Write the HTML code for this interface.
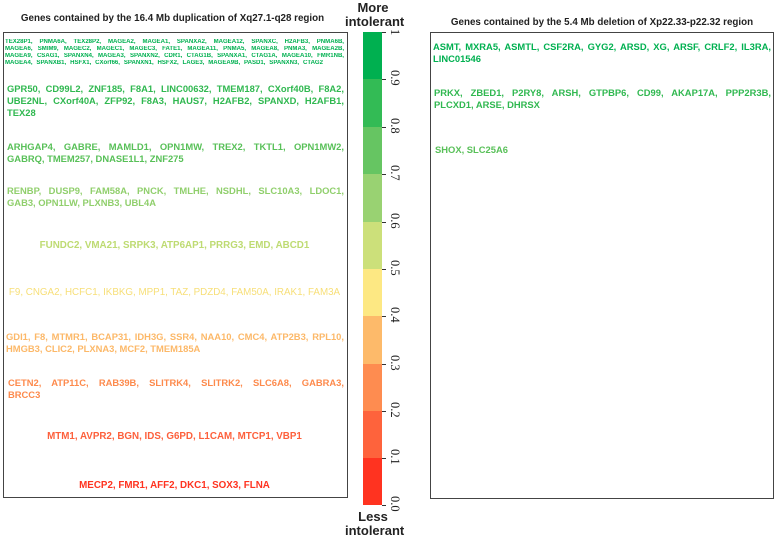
<!DOCTYPE html>
<html><head><style>
body{margin:0;width:777px;height:538px;background:#fff;position:relative;overflow:hidden;font-family:"Liberation Sans",Arial,sans-serif;}
.a{position:absolute;white-space:nowrap;}
.t{position:absolute;font-weight:bold;font-size:9.8px;color:#222;}
.box{position:absolute;border:1px solid #444;}
.g{position:absolute;font-weight:bold;font-size:9.4px;line-height:12px;}
.g div{white-space:nowrap;height:12px;overflow:hidden;}
.g div.f{text-align:justify;text-align-last:justify;white-space:normal;}
.s{font-size:6.05px;line-height:7.1px;}
.s div{height:7.1px;}
.c{position:absolute;font-weight:bold;font-size:9.8px;text-align:center;white-space:nowrap;}
.band{position:absolute;left:363px;width:19px;}
.tk{position:absolute;left:382px;width:4px;height:1px;background:#333;}
.lb{position:absolute;font-family:"Liberation Serif",serif;font-size:12.5px;transform:rotate(90deg);transform-origin:left top;color:#222;}
</style></head><body>
<div class="t" style="left:0;width:345px;text-align:center;top:13px;">Genes contained by the 16.4 Mb duplication of Xq27.1-q28 region</div>
<div class="t" style="left:430px;width:344px;text-align:center;top:17px;">Genes contained by the 5.4 Mb deletion of Xp22.33-p22.32 region</div>
<div class="t" style="left:345px;width:56px;text-align:center;top:1px;font-size:13px;line-height:14px;">More<br>intolerant</div>
<div class="t" style="left:345px;width:56px;text-align:center;top:510px;font-size:13px;line-height:14px;">Less<br>intolerant</div>

<div class="box" style="left:3px;top:32px;width:343px;height:464px;"></div>
<div class="box" style="left:430px;top:32px;width:342px;height:465px;"></div>

<div class="g s" style="left:5px;top:39px;width:339px;color:#00b050;">
<div class="f">TEX28P1, PNMA6A, TEX28P2, MAGEA2, MAGEA1, SPANXA2, MAGEA12, SPANXC, H2AFB3, PNMA6B,</div>
<div class="f">MAGEA6, SMIM9, MAGEC2, MAGEC1, MAGEC3, FATE1, MAGEA11, PNMA5, MAGEA8, PNMA3, MAGEA2B,</div>
<div class="f">MAGEA9, CSAG1, SPANXN4, MAGEA3, SPANXN2, CDR1, CTAG1B, SPANXA1, CTAG1A, MAGEA10, FMR1NB,</div>
<div class="f" style="width:318px">MAGEA4, SPANXB1, HSFX1, CXorf66, SPANXN1, HSFX2, LAGE3, MAGEA9B, PASD1, SPANXN3, CTAG2</div>
</div>
<div class="g" style="left:7px;top:83px;width:337px;color:#30b850;">
<div class="f">GPR50, CD99L2, ZNF185, F8A1, LINC00632, TMEM187, CXorf40B, F8A2,</div>
<div class="f">UBE2NL, CXorf40A, ZFP92, F8A3, HAUS7, H2AFB2, SPANXD, H2AFB1,</div>
<div>TEX28</div></div>
<div class="g" style="left:7px;top:141px;width:337px;color:#58c058;">
<div class="f">ARHGAP4, GABRE, MAMLD1, OPN1MW, TREX2, TKTL1, OPN1MW2,</div>
<div>GABRQ, TMEM257, DNASE1L1, ZNF275</div></div>
<div class="g" style="left:7px;top:185px;width:337px;color:#90cf6c;">
<div class="f">RENBP, DUSP9, FAM58A, PNCK, TMLHE, NSDHL, SLC10A3, LDOC1,</div>
<div>GAB3, OPN1LW, PLXNB3, UBL4A</div></div>
<div class="c" style="left:3px;width:343px;top:240px;color:#bedb72;">FUNDC2, VMA21, SRPK3, ATP6AP1, PRRG3, EMD, ABCD1</div>
<div class="c" style="left:3px;width:343px;top:287px;color:#f7df78;font-weight:normal;">F9, CNGA2, HCFC1, IKBKG, MPP1, TAZ, PDZD4, FAM50A, IRAK1, FAM3A</div>
<div class="g" style="left:6px;top:331px;width:338px;color:#fcb868;">
<div class="f">GDI1, F8, MTMR1, BCAP31, IDH3G, SSR4, NAA10, CMC4, ATP2B3, RPL10,</div>
<div>HMGB3, CLIC2, PLXNA3, MCF2, TMEM185A</div></div>
<div class="g" style="left:8px;top:377px;width:336px;color:#fd8a4c;">
<div class="f">CETN2, ATP11C, RAB39B, SLITRK4, SLITRK2, SLC6A8, GABRA3,</div>
<div>BRCC3</div></div>
<div class="c" style="left:3px;width:343px;top:431px;color:#fd603c;">MTM1, AVPR2, BGN, IDS, G6PD, L1CAM, MTCP1, VBP1</div>
<div class="c" style="left:3px;width:343px;top:480px;color:#ff3320;">MECP2, FMR1, AFF2, DKC1, SOX3, FLNA</div>

<div class="g" style="left:433px;top:41px;width:338px;color:#00b050;">
<div class="f">ASMT, MXRA5, ASMTL, CSF2RA, GYG2, ARSD, XG, ARSF, CRLF2, IL3RA,</div>
<div>LINC01546</div></div>
<div class="g" style="left:434px;top:87px;width:337px;color:#30b850;">
<div class="f">PRKX, ZBED1, P2RY8, ARSH, GTPBP6, CD99, AKAP17A, PPP2R3B,</div>
<div>PLCXD1, ARSE, DHRSX</div></div>
<div class="a" style="left:435px;top:144px;font-weight:bold;font-size:9.4px;color:#58c058;">SHOX, SLC25A6</div>

<div class="band" style="top:32px;height:47px;background:#00b050;"></div>
<div class="band" style="top:79px;height:48px;background:#33bb55;"></div>
<div class="band" style="top:127px;height:47px;background:#66c562;"></div>
<div class="band" style="top:174px;height:48px;background:#99d272;"></div>
<div class="band" style="top:222px;height:47px;background:#cce07a;"></div>
<div class="band" style="top:269px;height:47px;background:#fde883;"></div>
<div class="band" style="top:316px;height:48px;background:#fdba6a;"></div>
<div class="band" style="top:364px;height:47px;background:#fe8c50;"></div>
<div class="band" style="top:411px;height:47px;background:#fe633c;"></div>
<div class="band" style="top:458px;height:47px;background:#ff3320;"></div>

<div class="tk" style="top:32px"></div><div class="lb" style="top:29px;left:402px">1</div>
<div class="tk" style="top:79px"></div><div class="lb" style="top:70px;left:402px">0.9</div>
<div class="tk" style="top:127px"></div><div class="lb" style="top:118px;left:402px">0.8</div>
<div class="tk" style="top:174px"></div><div class="lb" style="top:165px;left:402px">0.7</div>
<div class="tk" style="top:222px"></div><div class="lb" style="top:213px;left:402px">0.6</div>
<div class="tk" style="top:269px"></div><div class="lb" style="top:260px;left:402px">0.5</div>
<div class="tk" style="top:316px"></div><div class="lb" style="top:307px;left:402px">0.4</div>
<div class="tk" style="top:364px"></div><div class="lb" style="top:355px;left:402px">0.3</div>
<div class="tk" style="top:411px"></div><div class="lb" style="top:402px;left:402px">0.2</div>
<div class="tk" style="top:458px"></div><div class="lb" style="top:449px;left:402px">0.1</div>
<div class="tk" style="top:505px"></div><div class="lb" style="top:496px;left:402px">0.0</div>
</body></html>
